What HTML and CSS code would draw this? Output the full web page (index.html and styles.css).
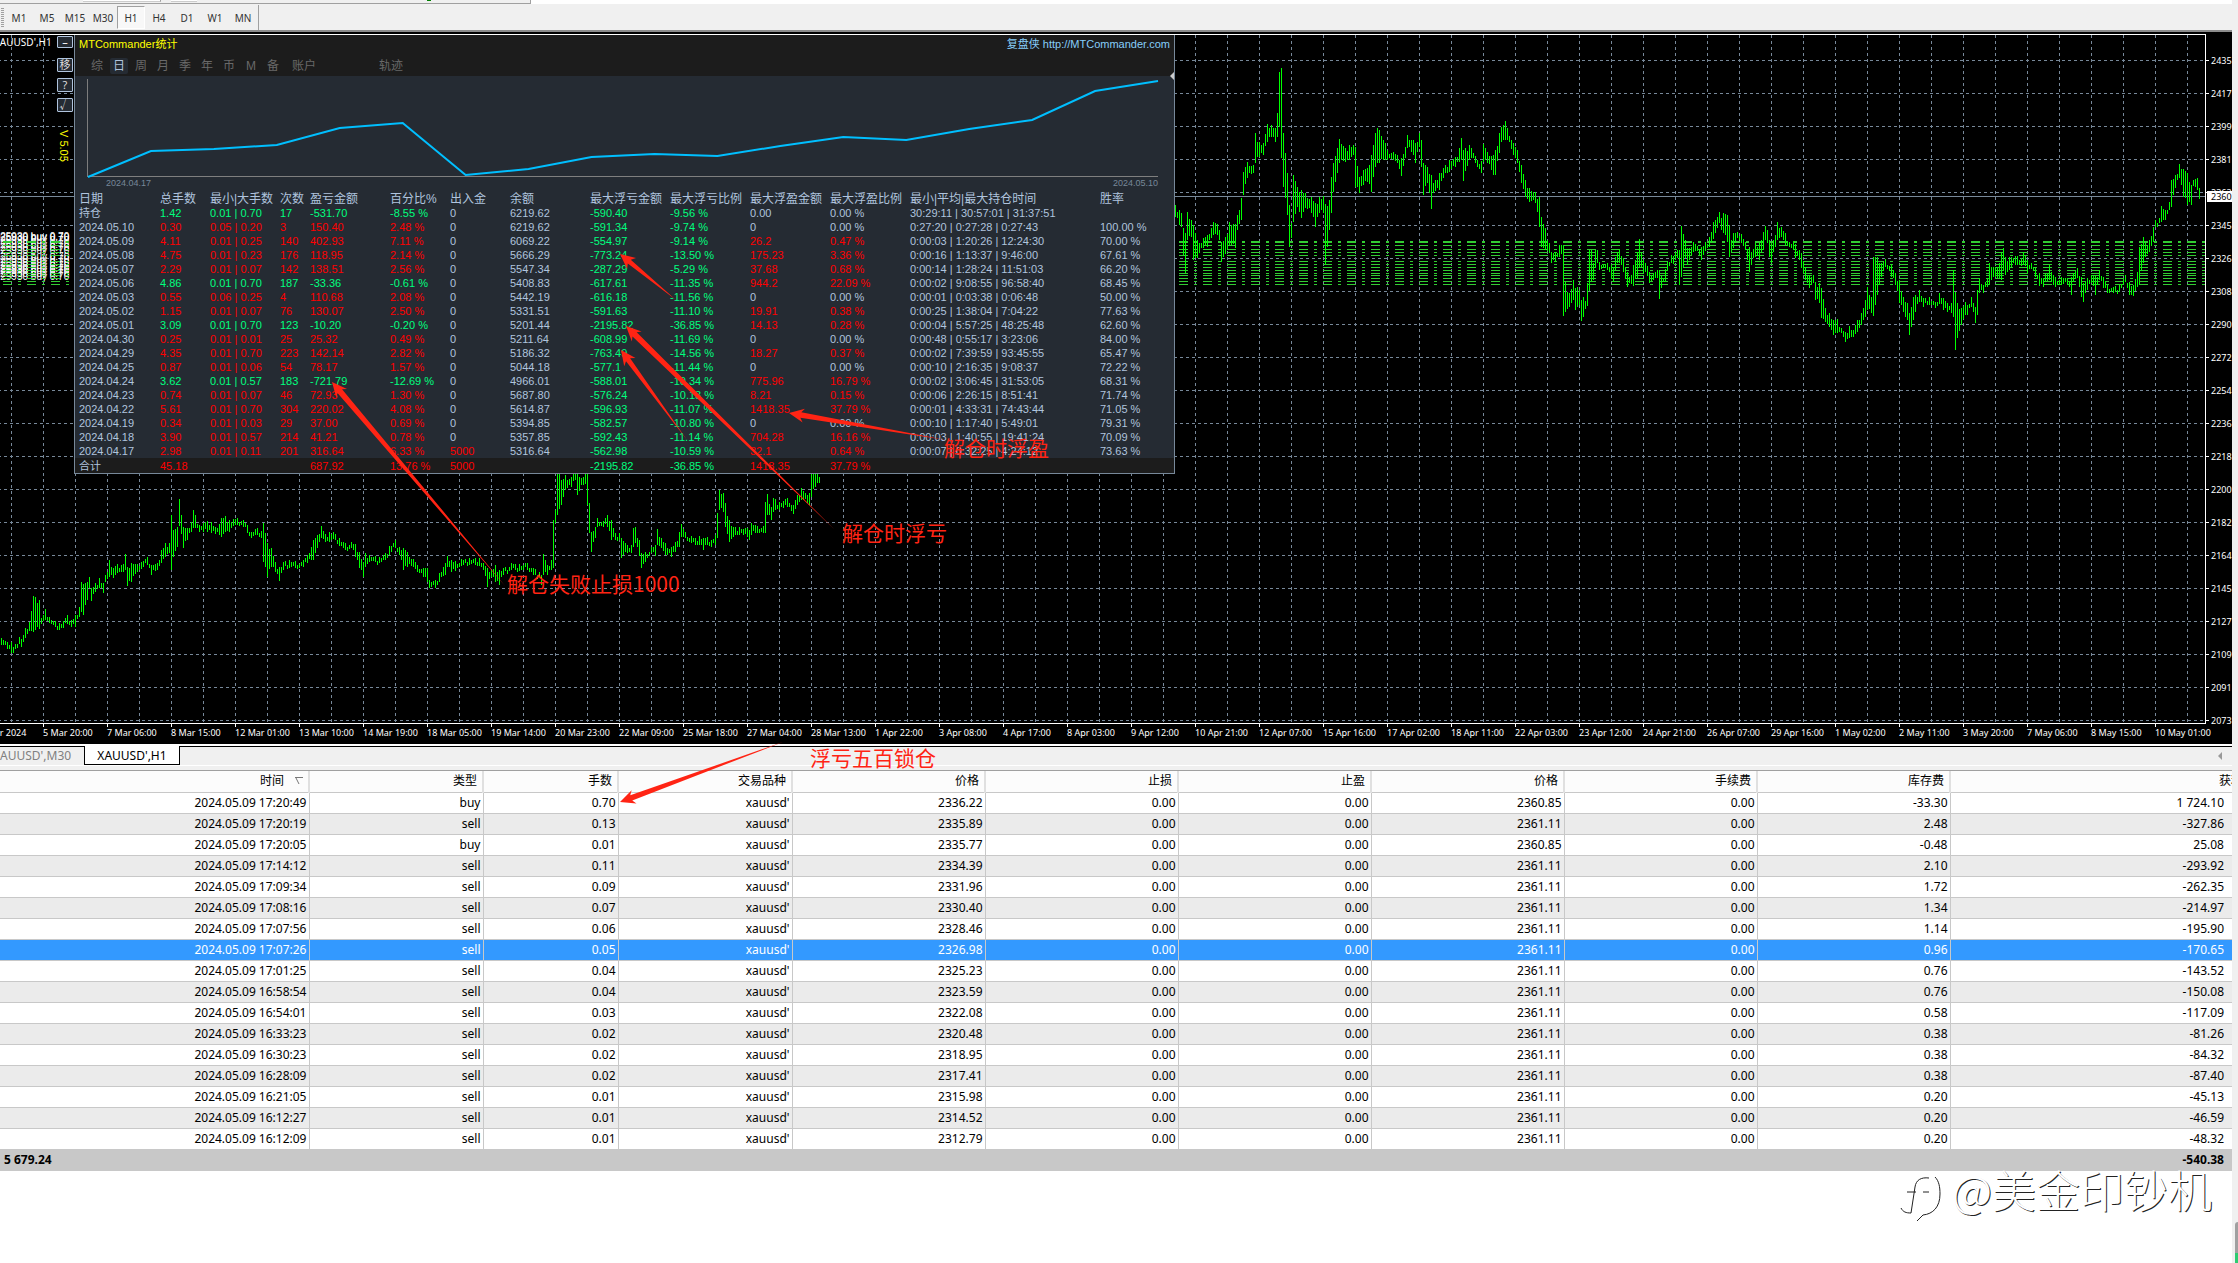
FILE: index.html
```html
<!DOCTYPE html>
<html lang="zh-CN">
<head>
    <meta charset="UTF-8">
    <meta name="viewport" content="width=device-width, initial-scale=1.0">
    <title>XAUUSD',H1</title>
    <link rel="stylesheet" href="styles.css">
</head>
<body>
    <div class="app">
        <div class="toolbar-edge">
            <span class="edge-seg seg-a"></span>
            <span class="edge-seg seg-b"></span>
            <span class="edge-dot"></span>
        </div>
        <nav class="toolbar">
            <span class="grip"></span>
            <div class="periods">
                <button>M1</button>
                <button>M5</button>
                <button>M15</button>
                <button>M30</button>
                <button class="active">H1</button>
                <button>H4</button>
                <button>D1</button>
                <button>W1</button>
                <button>MN</button>
            </div>
        </nav>

        <main class="chart">
            <div class="plot">
                <svg id="plot" class="plot-svg"></svg>
                <span class="symbol">XAUUSD',H1</span>
                <div class="side-buttons">
                    <button class="up">–</button>
                    <button>移</button>
                    <button>?</button>
                    <button>√</button>
                    <span class="version">V 5.05</span>
                </div>

                <section class="stats">
                    <header class="stats-title">
                        <span>MTCommander统计</span>
                        <a href="http://MTCommander.com">复盘侠 http://MTCommander.com</a>
                    </header>
                    <div class="stats-tabs">
                        <button>综</button>
                        <button class="active">日</button>
                        <button>周</button>
                        <button>月</button>
                        <button>季</button>
                        <button>年</button>
                        <button>币</button>
                        <button>M</button>
                        <button>备</button>
                        <button class="wide">账户</button>
                        <button class="wide track">轨迹</button>
                        <svg class="notch" width="4" height="8" viewBox="0 0 4 8"><path d="M4 0L0 4l4 4z" fill="#ccc"/></svg>
                    </div>
                    <svg class="curve" viewBox="0 0 1100 102" preserveAspectRatio="none">
                        <path d="M12.5 3V101M12 100.5H1084" stroke="#808080" fill="none"/>
                        <polyline points="13,101 76,75 139,73 202,69 265,52 328,47 391,99 454,93 517,81 580,78 643,80 706,70 769,61 832,64 895,53 958,44 1021,15 1084,5" stroke="#00bfff" stroke-width="2" fill="none"/>
                    </svg>
                    <div class="curve-dates"><span>2024.04.17</span><span>2024.05.10</span></div>
                    <table class="stats-table">
                        <colgroup>
                            <col class="w80"><col class="w50"><col class="w70"><col class="w30"><col class="w80"><col class="w60"><col class="w60">
                            <col class="w80"><col class="w80"><col class="w80"><col class="w80"><col class="w80"><col class="w190"><col>
                        </colgroup>
                        <thead>
                            <tr><th>日期</th><th>总手数</th><th>最小|大手数</th><th>次数</th><th>盈亏金额</th><th>百分比%</th><th>出入金</th><th>余额</th><th>最大浮亏金额</th><th>最大浮亏比例</th><th>最大浮盈金额</th><th>最大浮盈比例</th><th>最小|平均|最大持仓时间</th><th>胜率</th></tr>
                        </thead>
                        <tbody id="stats-body"></tbody>
                        <tfoot>
                            <tr><td>合计</td><td class="red">45.18</td><td></td><td></td><td class="red">687.92</td><td class="red">13.76 %</td><td class="red">5000</td><td></td><td class="green">-2195.82</td><td class="green">-36.85 %</td><td class="red">1418.35</td><td class="red">37.79 %</td><td></td><td></td></tr>
                        </tfoot>
                    </table>
                </section>
            </div>
            <div id="prices" class="prices"><span class="current">2360</span></div>
            <div id="dates" class="dates"></div>
        </main>

        <div class="chart-tabs">
            <button class="tab"><span>XAUUSD',M30</span></button>
            <button class="tab active">XAUUSD',H1</button>
            <svg width="6" height="8" viewBox="0 0 6 8"><path d="M4 0L0 4l4 4z" fill="#999"/></svg>
        </div>

        <div class="terminal">
            <table class="orders">
                <colgroup>
                    <col class="o-time"><col class="o-type"><col class="o-lots"><col class="o-type">
                    <col class="o-num"><col class="o-num"><col class="o-num"><col class="o-num"><col class="o-num"><col class="o-num"><col>
                </colgroup>
                <thead>
                    <tr><th>时间<svg class="sort" width="8" height="8" viewBox="0 0 8 8"><path d="M0 .5h8M1 1l3 6" stroke="#777" fill="none"/></svg></th><th>类型</th><th>手数</th><th>交易品种</th><th>价格</th><th>止损</th><th>止盈</th><th>价格</th><th>手续费</th><th>库存费</th><th class="profit"><span>获利</span></th></tr>
                </thead>
                <tbody id="orders-body"></tbody>
                <tfoot>
                    <tr><td colspan="10">5 679.24</td><td>-540.38</td></tr>
                </tfoot>
            </table>
        </div>
    </div>
    <aside class="gutter"><span class="thumb"></span><span class="mark"></span></aside>

    <!-- hand-drawn notes over the screen -->
    <svg id="arrows" class="arrows"></svg>
    <span class="note note-stop">解仓失败止损1000</span>
    <span class="note note-loss">解仓时浮亏</span>
    <span class="note note-gain">解仓时浮盈</span>
    <span class="note note-lock">浮亏五百锁仓</span>
    <div class="watermark">
        <svg width="42" height="50" viewBox="0 0 42 50" fill="none" stroke="#222" stroke-width="1">
            <path d="M29 5c-8-1-13 2-14 9l-4 26M7 19h9M23 19h6M35 4c4 4 5 10 5 17 0 13-7 20-17 21l-6 6M1 35c2 4 5 5 10 5"/>
        </svg>
        <span>@美金印钞机</span>
    </div>

    <script src="app.js"></script>
</body>
</html>
```
FILE: styles.css
```css
* {
    box-sizing: border-box;
}

body {
    margin: 0;
    display: flex;
    min-height: 100vh;
    position: relative;
    overflow: hidden;
    background: #fff;
    color: #000;
    font-family: "Noto Sans", "Noto Sans CJK SC", sans-serif;
    font-size: 12px;
}

button {
    margin: 0;
    padding: 0;
    border: 0;
    background: none;
    font: inherit;
    color: inherit;
}

table {
    width: 100%;
    table-layout: fixed;
    border-collapse: collapse;
}

.app {
    flex: 1;
    min-width: 0;
    display: flex;
    flex-direction: column;
}

/* toolbar */
.toolbar-edge {
    display: flex;
    height: 4px;
    width: 531px;
    border-right: 1px solid #a0a0a0;
    border-bottom: 1px solid #a0a0a0;
    background: #f0f0f0;
}

.edge-seg {
    height: 2px;
    background: #fff;
    border-bottom: 1px solid #ccc;
}

.seg-a {
    width: 78px;
    margin-left: 83px;
    border-right: 1px solid #a0a0a0;
}

.seg-b {
    width: 26px;
    margin-left: 10px;
}

.edge-dot {
    width: 4px;
    height: 1px;
    margin-left: 230px;
    background: #008000;
}

.toolbar {
    display: flex;
    height: 30px;
    padding: 1px 0 0 1px;
    background: #f0f0f0;
    border-bottom: 2px solid #000;
    box-shadow: inset 0 -2px 0 #8c8c8c;
    font-size: 10px;
    color: #333;
}

.toolbar-edge,
.toolbar {
    flex: none;
}

.grip {
    width: 3px;
    height: 19px;
    margin: 3px 1px 0 0;
    background: repeating-linear-gradient(#a0a0a0 0 1px, #f0f0f0 1px 2px);
}

.periods {
    display: flex;
    width: 254px;
    height: 25px;
    padding: 1px 0;
    border-right: 1px solid #a0a0a0;
}

.periods button {
    width: 28px;
    height: 23px;
}

.periods .active {
    background: #f8f8f8;
    border: 1px solid #fff;
    border-top-color: #a0a0a0;
    border-left-color: #a0a0a0;
}

/* chart */
.chart {
    display: grid;
    grid-template-columns: minmax(0, 1fr) 26px;
    grid-template-rows: 690px 20px;
    background: #000;
    color: #fff;
    font-size: 9px;
    overflow: hidden;
}

.plot {
    position: relative;
    border-top: 1px solid #fff;
    border-right: 1px solid #fff;
    border-bottom: 1px solid #fff;
    overflow: hidden;
}

.plot-svg {
    display: block;
    width: 100%;
    height: 100%;
}

.pile {
    fill: #fff;
    font: 10px "Liberation Sans", sans-serif;
}

.prices {
    position: relative;
    padding-top: 10px;
    overflow: hidden;
}

.prices .price {
    display: block;
    height: 33px;
    line-height: 33px;
    padding-left: 5px;
    background: linear-gradient(#fff, #fff) 0 16px / 3px 1px no-repeat;
}

.prices .current {
    position: absolute;
    left: 1px;
    right: 0;
    top: 157px;
    padding-left: 4px;
    line-height: 11px;
    background: #fff;
    color: #000;
}

.dates {
    grid-column: 1 / 3;
    display: flex;
    margin-left: -21px;
    line-height: 18px;
    white-space: nowrap;
    overflow: hidden;
}

.dates span {
    flex: none;
    width: 64px;
    background: linear-gradient(#fff, #fff) 0 0 / 1px 3px no-repeat;
}

.symbol {
    position: absolute;
    left: -6px;
    top: 0;
    font-size: 10px;
    line-height: 15px;
}

.side-buttons {
    position: absolute;
    left: 57px;
    top: 1px;
    display: flex;
    flex-direction: column;
    gap: 6px;
    width: 16px;
}

.side-buttons button {
    height: 14px;
    line-height: 12px;
    border: 1px solid #b0c4de;
    border-radius: 1px;
    background: #252b33;
    color: #ddd;
    font-size: 11px;
    overflow: hidden;
}

.side-buttons .up {
    height: 12px;
    margin-bottom: 4px;
    line-height: 8px;
    color: #fff;
}

.version {
    writing-mode: vertical-rl;
    margin-top: 12px;
    color: #ff0;
    font: 11px/18px "Liberation Sans", sans-serif;
}

/* statistics window */
.stats {
    position: absolute;
    left: 74px;
    top: 0;
    width: 1101px;
    border: 1px solid #778899;
    border-top: 0;
    background: #252b33;
    color: #b0c4de;
    font: 11px "Liberation Sans", "Noto Sans CJK SC", sans-serif;
}

.stats-title {
    display: flex;
    justify-content: space-between;
    padding: 0 4px;
    height: 21px;
    line-height: 19px;
    background: #1c1c1c;
    color: #ff0;
}

.stats-title a {
    color: #87cefa;
    text-decoration: none;
}

.stats-tabs {
    display: flex;
    align-items: center;
    position: relative;
    height: 20px;
    padding-left: 13px;
    background: #1c1c1c;
    color: #696969;
    font-size: 12px;
}

.stats-tabs button {
    width: 18px;
    height: 16px;
    line-height: 17px;
    margin-right: 4px;
    border-radius: 2px;
}

.stats-tabs .active {
    background: #252b33;
    color: #b0c4de;
}

.stats-tabs .wide {
    width: 36px;
}

.stats-tabs .track {
    margin-left: 47px;
}

.notch {
    position: absolute;
    right: 0;
    bottom: -4px;
}

.curve {
    display: block;
    width: 100%;
    height: 102px;
}

.curve-dates {
    display: flex;
    justify-content: space-between;
    height: 14px;
    padding: 0 16px 0 31px;
    line-height: 11px;
    color: #778899;
    font-size: 9px;
}

.stats-table {
    line-height: 14px;
    white-space: nowrap;
}

.stats-table th,
.stats-table td {
    height: 14px;
    padding: 0;
    text-align: left;
    font-weight: normal;
}

.stats-table th:first-child,
.stats-table td:first-child {
    padding-left: 4px;
}

.stats-table th {
    font-size: 12px;
}

.stats-table tfoot td {
    height: 15px;
    background: #1c1c1c;
}

.w80 { width: 80px; }
.w50 { width: 50px; }
.w70 { width: 70px; }
.w30 { width: 30px; }
.w60 { width: 60px; }
.w190 { width: 190px; }
.stats-table .w80:first-child { width: 85px; }

.green { color: #00ff7f; }
.red { color: #f00; }

/* chart tabs */
.chart-tabs {
    display: flex;
    height: 27px;
    padding-right: 8px;
    border-top: 2px solid #fff;
    border-bottom: 1px solid #a0a0a0;
    background: #f0f0f0;
    box-shadow: inset 0 1px 0 #000, inset 0 -4px 0 #f0f0f0, inset 0 -5px 0 #fff;
}

.chart-tabs .tab {
    width: 84px;
    height: 19px;
    color: #808080;
    text-align: left;
    overflow: hidden;
}

.chart-tabs .tab span {
    margin-left: -7px;
}

.chart-tabs .active {
    width: 96px;
    border: 1px solid #000;
    border-top: 0;
    background: #fff;
    color: #000;
    text-align: center;
}

.chart-tabs svg {
    margin: 6px 0 0 auto;
}

/* orders */
.terminal {
    flex: 1;
    overflow: hidden;
    background: #fff;
}

.orders {
    white-space: nowrap;
}

.o-time { width: 309px; }
.o-type { width: 174px; }
.o-lots { width: 135px; }
.o-num { width: 193px; }

.orders th,
.orders td {
    height: 21px;
    padding: 0 2px 0 0;
    line-height: 20px;
    text-align: right;
    font-weight: normal;
    border-right: 1px solid #c8c8c8;
    border-bottom: 1px solid #c8c8c8;
    overflow: hidden;
}

.orders th {
    padding-right: 5px;
    background: #fcfcfc;
    border-right: 2px solid #e0e0e0;
}

.orders tr > :last-child {
    padding-right: 8px;
    border-right: 0;
}

.orders .profit span {
    margin-right: -19px;
}

.sort {
    margin: 0 0 0 11px;
}

.orders tbody tr:nth-child(even) {
    background: #ebebeb;
}

.orders tbody tr.selected {
    background: #3399ff;
    color: #fff;
}

.orders tfoot td {
    background: #c8c8c8;
    border-right: 0;
    font-weight: bold;
}

.orders tfoot td:first-child {
    padding-left: 4px;
    text-align: left;
}

.gutter {
    width: 6px;
    display: flex;
    flex-direction: column;
    justify-content: flex-end;
    align-items: flex-end;
    background: #f0f0f0;
}

.thumb {
    width: 3px;
    height: 31px;
    border-radius: 3px 0 0 0;
    background: #a0a0a0;
}

.mark {
    width: 3px;
    height: 10px;
    background: #2ecc71;
}

/* notes */
.arrows {
    position: absolute;
    left: 0;
    top: 0;
    width: 100%;
    height: 100%;
    pointer-events: none;
}

.note {
    position: absolute;
    color: #ff2414;
    font: 21px/30px "Noto Sans CJK SC", sans-serif;
    white-space: nowrap;
}

.note-stop { left: 507px; top: 568px; }
.note-loss { left: 842px; top: 517px; }
.note-gain { left: 944px; top: 432px; }
.note-lock { left: 810px; top: 742px; }

.watermark {
    position: absolute;
    right: 26px;
    bottom: 40px;
    display: flex;
    align-items: flex-end;
    gap: 10px;
    color: #fff;
    font: 300 44px/68px "Noto Sans CJK SC", sans-serif;
    text-shadow: 1px 1px 0 #222;
}
```
FILE: app.js
```js
const SLATE = '#778899';

// high/low envelope of the bars: x, high, low
const leftBars = `1,638,645 6,642,649 10,642,653 13,647,653 18,637,644 21,639,647 24,628,638 29,622,631 33,596,632 38,600,629 41,618,624 45,609,620 49,617,623 55,621,627 59,623,630 63,621,628 67,615,624 71,620,627 75,615,627 78,607,617 81,582,612 83,584,615 86,582,600 89,577,588 91,588,601 95,583,592 98,578,588 102,583,593 105,575,582 108,560,577 110,567,575 113,568,578 117,564,573 121,565,572 123,564,572 125,554,570 127,567,586 131,563,582 136,564,572 141,562,569 146,557,565 151,565,575 156,563,570 161,550,563 164,543,557 168,543,553 171,515,570 173,530,557 176,527,547 179,499,526 183,527,548 186,528,540 190,522,532 193,510,528 198,525,532 202,523,532 206,521,532 210,522,533 214,527,534 220,518,537 224,516,532 229,520,532 233,519,526 237,518,525 242,520,527 246,525,533 251,532,538 256,528,535 260,531,538 263,523,562 267,543,577 271,548,567 274,562,572 278,567,581 282,562,570 288,560,568 294,561,568 302,560,567 307,555,563 312,540,560 316,535,548 320,526,538 324,534,542 329,532,542 333,532,539 339,538,546 345,543,550 351,542,548 355,544,557 358,552,568 362,562,577 365,553,567 369,555,562 378,557,563 384,553,560 389,546,555 395,540,548 399,547,555 402,548,570 407,552,567 412,559,567 417,565,572 422,568,577 427,568,582 429,580,588 434,580,588 439,573,582 444,563,575 447,556,567 451,560,572 455,561,571 461,559,566 469,558,565 478,558,566 482,563,570 486,568,587 490,570,577 494,565,582 498,570,585 503,568,575 510,563,570 518,564,571 527,563,570 533,568,575 538,572,577 541,575,585 543,554,575 547,565,575 550,560,570 552,520,568 555,510,523 557,440,515 561,480,505 565,475,490 571,477,487 575,440,480 577,473,495 582,477,485 585,440,484 587,473,505 589,503,533 591,532,552 594,527,538 596,518,527 602,521,527 607,515,527 610,520,540 614,533,540 618,533,540 621,538,558 626,545,553 630,545,553 633,528,547 635,527,543 638,540,556 641,553,568 645,552,562 650,547,553 654,545,556 657,529,545 661,538,548 665,543,555 670,547,557 674,542,552 678,532,547 680,524,537 685,532,538 690,536,543 694,538,545 699,536,545 702,538,550 706,537,545 711,540,547 715,535,545 717,513,538 719,490,510 722,493,512 725,503,527 729,520,542 732,527,537 739,527,535 746,528,537 748,530,540 751,523,535 757,526,533 762,526,533 764,502,533 767,494,515 771,507,520 773,498,512 779,502,510 786,498,507 792,505,514 797,495,505 801,488,500 806,495,503 809,493,505 811,440,497 817,440,483 819,477,483`;

const rightBars = `1175,205,217 1178,210,225 1181,213,227 1183,228,255 1185,233,273 1187,212,240 1190,220,237 1193,225,260 1196,240,258 1199,243,253 1203,238,248 1207,235,247 1212,222,235 1216,224,235 1219,230,240 1221,242,262 1225,237,254 1229,222,245 1234,224,248 1237,215,230 1240,198,220 1243,172,195 1247,162,178 1252,165,173 1255,133,163 1258,142,157 1262,143,155 1266,124,142 1271,125,137 1274,128,142 1277,113,137 1279,72,127 1281,68,158 1283,133,187 1286,173,215 1288,205,247 1291,223,238 1293,175,222 1297,187,207 1301,190,218 1305,193,208 1310,197,213 1314,203,227 1319,197,213 1323,196,213 1325,204,265 1329,200,230 1331,177,213 1333,163,192 1336,148,173 1339,139,163 1344,148,162 1348,145,160 1353,145,155 1355,147,187 1358,177,193 1362,170,185 1367,168,182 1371,155,192 1374,133,167 1376,128,163 1379,130,163 1384,143,160 1387,150,160 1393,152,160 1397,155,163 1401,158,176 1404,147,158 1407,135,148 1412,140,155 1414,143,163 1418,133,147 1420,140,167 1423,163,195 1427,167,183 1430,175,209 1433,183,193 1438,173,190 1442,168,178 1448,160,172 1454,157,167 1459,148,162 1461,138,160 1463,150,181 1468,145,160 1471,148,158 1476,160,167 1481,161,173 1483,144,162 1487,152,163 1492,155,175 1495,150,175 1498,133,153 1501,127,142 1504,121,140 1507,128,140 1512,143,155 1516,150,163 1521,165,183 1525,180,197 1529,188,202 1534,192,203 1538,197,227 1540,217,247 1545,228,250 1549,243,253 1551,252,263 1555,252,262 1559,245,257 1561,245,254 1563,245,316 1565,282,312 1568,293,307 1572,280,300 1574,288,310 1576,287,307 1578,290,305 1580,300,321 1582,297,317 1584,301,309 1586,283,306 1588,250,291 1590,250,282 1592,263,280 1594,250,268 1596,250,263 1599,262,270 1603,264,268 1607,263,270 1610,265,279 1612,267,282 1614,257,270 1617,252,263 1619,249,263 1622,258,272 1624,267,279 1626,272,287 1630,275,284 1632,265,286 1634,260,279 1636,252,278 1638,239,267 1640,253,267 1643,260,273 1646,266,276 1648,272,283 1652,273,280 1656,270,278 1659,270,299 1662,278,282 1664,269,282 1667,262,271 1670,255,263 1673,256,264 1676,250,258 1679,250,285 1681,226,277 1684,240,258 1686,248,265 1688,248,260 1692,242,252 1696,246,251 1701,247,260 1705,242,251 1709,237,247 1713,222,239 1716,217,228 1718,212,223 1721,218,230 1723,213,233 1726,215,242 1728,225,257 1730,240,252 1733,233,248 1736,232,238 1740,234,243 1744,242,250 1748,247,272 1751,252,265 1755,243,257 1759,243,260 1762,232,250 1764,226,240 1767,230,243 1769,240,257 1771,243,263 1774,235,247 1777,222,240 1781,227,237 1784,233,245 1788,242,247 1793,241,250 1795,244,258 1798,250,260 1801,253,268 1805,267,280 1808,275,288 1812,275,283 1815,282,300 1818,283,303 1820,288,318 1824,308,322 1828,313,327 1832,320,335 1836,319,333 1840,328,333 1845,332,342 1849,326,338 1853,330,337 1856,320,332 1860,313,325 1864,300,317 1867,287,310 1871,297,313 1873,257,316 1877,257,295 1880,263,277 1885,259,267 1890,265,277 1894,273,285 1898,280,303 1902,297,312 1904,302,317 1907,303,320 1909,313,335 1912,297,320 1915,295,312 1919,290,302 1923,298,307 1929,297,305 1934,302,308 1938,293,304 1942,298,310 1947,303,312 1951,303,313 1953,270,317 1955,292,350 1957,303,338 1960,308,325 1964,302,315 1967,305,315 1971,297,307 1975,307,323 1977,290,315 1979,278,293 1982,285,293 1987,278,287 1989,263,285 1993,267,277 1997,267,278 2000,253,280 2002,248,270 2004,257,275 2008,257,270 2011,257,267 2016,256,265 2020,258,266 2023,252,265 2026,260,273 2030,263,269 2035,268,277 2039,273,286 2043,278,287 2048,265,280 2052,275,285 2055,277,287 2060,277,285 2066,278,284 2070,277,295 2073,273,282 2077,268,278 2081,277,297 2083,283,302 2087,278,290 2091,275,283 2094,275,295 2099,270,280 2102,277,288 2106,285,293 2113,287,293 2119,285,292 2124,275,282 2128,282,295 2132,285,296 2136,272,287 2139,247,285 2142,237,263 2145,243,257 2148,240,252 2152,227,242 2155,220,227 2159,218,223 2161,206,222 2165,210,220 2169,202,210 2171,180,207 2175,175,188 2179,164,178 2183,169,197 2187,173,205 2190,185,205 2193,180,186 2196,178,190 2199,188,199`;

// one bar on every odd pixel, the ones between two known bars are interpolated
function barsPath(text) {
    const pts = text.split(' ').map(p => p.split(',').map(Number));
    pts.forEach(p => { p[0] |= 1; });
    let d = '';
    let i = 0;
    for (let x = pts[0][0]; x <= pts[pts.length - 1][0]; x += 2) {
        while (i < pts.length - 2 && pts[i + 1][0] <= x) i++;
        const a = pts[i], b = pts[i + 1];
        let hi, lo;
        if (a[0] === x) {
            [, hi, lo] = a;
        } else if (b[0] === x) {
            [, hi, lo] = b;
        } else {
            const t = (x - a[0]) / (b[0] - a[0]);
            hi = Math.round(a[1] + (b[1] - a[1]) * t) + (x * 7 % 5);
            lo = Math.round(a[2] + (b[2] - a[2]) * t) - (x * 11 % 4);
        }
        d += `M${x + 0.5} ${hi}V${Math.max(lo, hi + 4)}`;
    }
    return d;
}

function drawPlot() {
    let grid = '', orders = '', pile = '';
    for (let x = 11; x < 2205; x += 32) grid += `M${x + 0.5} 35V723`;
    for (let y = 60; y < 723; y += 33) grid += `M-2 ${y + 0.5}H2205`;
    [241, 242, 245, 249, 252, 255, 261, 264, 267, 270, 273, 275, 278, 281, 284].forEach(y => {
        orders += `M3 ${y + 0.5}H69M1179 ${y + 0.5}H2205`;
        if (y < 282) pile += `<text x="-22" y="${y - 1}">#51025930 buy 0.70</text>`;
    });
    document.getElementById('plot').innerHTML = `
        <g transform="translate(0 -35)" fill="none" shape-rendering="crispEdges">
            <path d="${grid}" stroke="${SLATE}" stroke-dasharray="3 3"/>
            <path d="M0 196.5H2205" stroke="${SLATE}"/>
            <g class="pile">${pile}</g>
            <path d="${orders}" stroke="#32cd32" stroke-dasharray="9 6 3 6"/>
            <path d="${barsPath(leftBars)}${barsPath(rightBars)}" stroke="#00ff00"/>
        </g>`;
}

function drawAxes() {
    const prices = [2435, 2417, 2399, 2381, 2363, 2345, 2326, 2308, 2290, 2272, 2254, 2236, 2218, 2200, 2182, 2164, 2145, 2127, 2109, 2091, 2073];
    document.getElementById('prices').insertAdjacentHTML('afterbegin',
        prices.map(p => `<span class="price">${p}</span>`).join(''));
    const dates = ['1 Mar 2024', '5 Mar 20:00', '7 Mar 06:00', '8 Mar 15:00', '12 Mar 01:00', '13 Mar 10:00', '14 Mar 19:00', '18 Mar 05:00', '19 Mar 14:00', '20 Mar 23:00', '22 Mar 09:00', '25 Mar 18:00', '27 Mar 04:00', '28 Mar 13:00', '1 Apr 22:00', '3 Apr 08:00', '4 Apr 17:00', '8 Apr 03:00', '9 Apr 12:00', '10 Apr 21:00', '12 Apr 07:00', '15 Apr 16:00', '17 Apr 02:00', '18 Apr 11:00', '22 Apr 03:00', '23 Apr 12:00', '24 Apr 21:00', '26 Apr 07:00', '29 Apr 16:00', '1 May 02:00', '2 May 11:00', '3 May 20:00', '7 May 06:00', '8 May 15:00', '10 May 01:00'];
    document.getElementById('dates').innerHTML = dates.map(d => `<span>${d}</span>`).join('');
}

const stats = `持仓,1.42,0.01 | 0.70,17,-531.70,-8.55,0,6219.62,-590.40,-9.56,0.00,0.00,30:29:11 | 30:57:01 | 31:37:51,
2024.05.10,0.30,0.05 | 0.20,3,150.40,2.48,0,6219.62,-591.34,-9.74,0,0.00,0:27:20 | 0:27:28 | 0:27:43,100.00
2024.05.09,4.11,0.01 | 0.25,140,402.93,7.11,0,6069.22,-554.97,-9.14,26.2,0.47,0:00:03 | 1:20:26 | 12:24:30,70.00
2024.05.08,4.75,0.01 | 0.23,176,118.95,2.14,0,5666.29,-773.24,-13.50,175.23,3.36,0:00:16 | 1:13:37 | 9:46:00,67.61
2024.05.07,2.29,0.01 | 0.07,142,138.51,2.56,0,5547.34,-287.29,-5.29,37.68,0.68,0:00:14 | 1:28:24 | 11:51:03,66.20
2024.05.06,4.86,0.01 | 0.70,187,-33.36,-0.61,0,5408.83,-617.61,-11.35,944.2,22.09,0:00:02 | 9:08:55 | 96:58:40,68.45
2024.05.03,0.55,0.06 | 0.25,4,110.68,2.08,0,5442.19,-616.18,-11.56,0,0.00,0:00:01 | 0:03:38 | 0:06:48,50.00
2024.05.02,1.15,0.01 | 0.07,76,130.07,2.50,0,5331.51,-591.63,-11.10,19.91,0.38,0:00:25 | 1:38:04 | 7:04:22,77.63
2024.05.01,3.09,0.01 | 0.70,123,-10.20,-0.20,0,5201.44,-2195.82,-36.85,14.13,0.28,0:00:04 | 5:57:25 | 48:25:48,62.60
2024.04.30,0.25,0.01 | 0.01,25,25.32,0.49,0,5211.64,-608.99,-11.69,0,0.00,0:00:48 | 0:55:17 | 3:23:06,84.00
2024.04.29,4.35,0.01 | 0.70,223,142.14,2.82,0,5186.32,-763.49,-14.56,18.27,0.37,0:00:02 | 7:39:59 | 93:45:55,65.47
2024.04.25,0.87,0.01 | 0.06,54,78.17,1.57,0,5044.18,-577.1,-11.44,0,0.00,0:00:10 | 2:16:35 | 9:08:37,72.22
2024.04.24,3.62,0.01 | 0.57,183,-721.79,-12.69,0,4966.01,-588.01,-10.34,775.96,16.79,0:00:02 | 3:06:45 | 31:53:05,68.31
2024.04.23,0.74,0.01 | 0.07,46,72.93,1.30,0,5687.80,-576.24,-10.13,8.21,0.15,0:00:06 | 2:26:15 | 8:51:41,71.74
2024.04.22,5.61,0.01 | 0.70,304,220.02,4.08,0,5614.87,-596.93,-11.07,1418.35,37.79,0:00:01 | 4:33:31 | 74:43:44,71.05
2024.04.19,0.34,0.01 | 0.03,29,37.00,0.69,0,5394.85,-582.57,-10.80,0,0.00,0:00:10 | 1:17:40 | 5:49:01,79.31
2024.04.18,3.90,0.01 | 0.57,214,41.21,0.78,0,5357.85,-592.43,-11.14,704.28,16.16,0:00:03 | 1:40:55 | 19:41:24,70.09
2024.04.17,2.98,0.01 | 0.11,201,316.64,6.33,5000,5316.64,-562.98,-10.59,32.1,0.64,0:00:07 | 0:32:25 | 4:24:12,73.63`;

function fillStats() {
    document.getElementById('stats-body').innerHTML = stats.split('\n').map(line => {
        const row = line.split(',');
        return '<tr>' + row.map((v, i) => {
            let cls = '';
            if (i >= 1 && i <= 5) cls = row[4] < 0 ? 'green' : 'red';
            if (i === 6 && +v) cls = 'red';
            if (i === 8 || i === 9) cls = 'green';
            if ((i === 10 || i === 11) && +v) cls = 'red';
            const unit = v && [5, 9, 11, 13].includes(i) ? ' %' : '';
            return `<td class="${cls}">${v}${unit}</td>`;
        }).join('') + '</tr>';
    }).join('');
}

// time, type, lots, open price, current price, swap, profit
const orders = [
    ['17:20:49', 'buy', '0.70', '2336.22', '2360.85', '-33.30', '1 724.10'],
    ['17:20:19', 'sell', '0.13', '2335.89', '2361.11', '2.48', '-327.86'],
    ['17:20:05', 'buy', '0.01', '2335.77', '2360.85', '-0.48', '25.08'],
    ['17:14:12', 'sell', '0.11', '2334.39', '2361.11', '2.10', '-293.92'],
    ['17:09:34', 'sell', '0.09', '2331.96', '2361.11', '1.72', '-262.35'],
    ['17:08:16', 'sell', '0.07', '2330.40', '2361.11', '1.34', '-214.97'],
    ['17:07:56', 'sell', '0.06', '2328.46', '2361.11', '1.14', '-195.90'],
    ['17:07:26', 'sell', '0.05', '2326.98', '2361.11', '0.96', '-170.65'],
    ['17:01:25', 'sell', '0.04', '2325.23', '2361.11', '0.76', '-143.52'],
    ['16:58:54', 'sell', '0.04', '2323.59', '2361.11', '0.76', '-150.08'],
    ['16:54:01', 'sell', '0.03', '2322.08', '2361.11', '0.58', '-117.09'],
    ['16:33:23', 'sell', '0.02', '2320.48', '2361.11', '0.38', '-81.26'],
    ['16:30:23', 'sell', '0.02', '2318.95', '2361.11', '0.38', '-84.32'],
    ['16:28:09', 'sell', '0.02', '2317.41', '2361.11', '0.38', '-87.40'],
    ['16:21:05', 'sell', '0.01', '2315.98', '2361.11', '0.20', '-45.13'],
    ['16:12:27', 'sell', '0.01', '2314.52', '2361.11', '0.20', '-46.59'],
    ['16:12:09', 'sell', '0.01', '2312.79', '2361.11', '0.20', '-48.32']
];

function fillOrders() {
    document.getElementById('orders-body').innerHTML = orders.map(([time, type, lots, open, price, swap, profit]) => {
        const cells = ['2024.05.09 ' + time, type, lots, "xauusd'", open, '0.00', '0.00', price, '0.00', swap, profit];
        return `<tr${time === '17:07:26' ? ' class="selected"' : ''}>` + cells.map(c => `<td>${c}</td>`).join('') + '</tr>';
    }).join('');
}

// tapered arrow from the tail to the tip
function arrow(tx, ty, x, y) {
    const len = Math.hypot(x - tx, y - ty);
    const angle = Math.atan2(y - ty, x - tx) * 180 / Math.PI;
    const w = Math.min(3, 2 + len / 200);
    return `<path transform="translate(${x} ${y}) rotate(${angle})" fill="#ff2414"
        d="M0 0L-15 -7L-12 ${-w}L${-len} 0L-12 ${w}L-15 7Z"/>`;
}

function drawArrows() {
    document.getElementById('arrows').innerHTML =
        arrow(506, 587, 332, 382) +
        arrow(835, 530, 626, 326) +
        arrow(676, 300, 620, 254) +
        arrow(687, 440, 621, 350) +
        arrow(946, 440, 789, 413) +
        arrow(783, 742, 620, 802);
}

drawPlot();
drawAxes();
fillStats();
fillOrders();
drawArrows();
```
